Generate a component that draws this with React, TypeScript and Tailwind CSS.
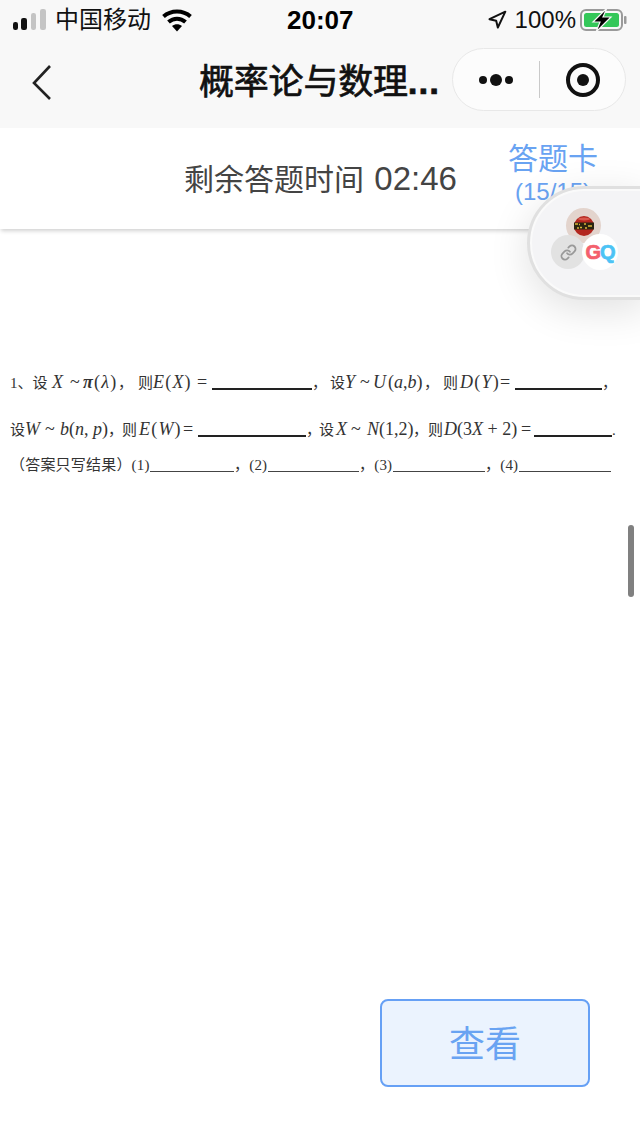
import type { ReactNode } from "react";
import { Link, Navigation } from "lucide-react";

const cjk = { fontFamily: '"Liberation Sans", "Noto Sans CJK SC", sans-serif' };
const serif = { fontFamily: '"Liberation Serif", "Noto Sans CJK SC", serif' };

function SignalBars() {
  return (
    <svg width="34" height="22" viewBox="0 0 34 22">
      <rect x="0" y="13" width="5" height="8" rx="2.2" fill="#111" />
      <rect x="8" y="9" width="6" height="12" rx="2.2" fill="#111" />
      <rect x="18" y="4" width="5" height="17" rx="2.2" fill="#c4c4c4" />
      <rect x="27" y="0" width="6" height="21" rx="2.2" fill="#c4c4c4" />
    </svg>
  );
}

function Wifi() {
  return (
    <svg width="30" height="23" viewBox="0 0 30 23" fill="none" stroke="#000" strokeWidth="4">
      <path d="M1.5 7.5C9 0.8 21 0.8 28.5 7.5" />
      <path d="M6.5 13C11.5 8.5 18.5 8.5 23.5 13" />
      <path d="M10 17L15 22.5L20 17C17 14.5 13 14.5 10 17Z" fill="#000" stroke="none" />
    </svg>
  );
}

function Battery() {
  return (
    <svg width="48" height="24" viewBox="0 0 48 24">
      <rect x="1" y="2" width="41" height="20" rx="5" fill="none" stroke="#9a9a9a" strokeWidth="2" />
      <rect x="4" y="5" width="35" height="14" rx="2.5" fill="#34c759" />
      <rect x="44" y="8" width="2.5" height="8" rx="1" fill="#9a9a9a" />
      <path d="M27 0L13 14H20L16 24L31 9H23Z" fill="#000" stroke="#f8f8f8" strokeWidth="1.2" />
    </svg>
  );
}

function Lips() {
  return (
    <svg width="22" height="22" viewBox="0 0 22 22">
      <ellipse cx="11" cy="11" rx="10" ry="10" fill="#b3261e" />
      <ellipse cx="11" cy="4" rx="6" ry="1.5" fill="#d9574c" />
      <rect x="1" y="7.5" width="20" height="7" fill="#2a2410" />
      <path d="M2 9h3M7 12.5h2M11 9h2M15 11h4M4 13h2M12 13h2M6 9.5h1" stroke="#d9b53a" strokeWidth="1.4" />
    </svg>
  );
}

function FloatingPill() {
  return (
    <div className="absolute left-[527px] top-[186px] h-[114px] w-[120px] rounded-l-[57px] border-[3px] border-[#e0e0e0] bg-[#f4f4f6] shadow-[0_10px_40px_rgba(0,0,0,0.12),inset_0_0_0_2px_#fafafa]">
      <div className="absolute left-[36px] top-[19px] flex h-[35px] w-[35px] items-center justify-center rounded-full bg-[#e3d4cd]">
        <Lips />
      </div>
      <div className="absolute left-[21px] top-[46px] flex h-[34px] w-[34px] items-center justify-center rounded-full bg-[#e2e2e2]">
        <Link size={17} color="#999" strokeWidth={2.5} />
      </div>
      <div className="absolute left-[52px] top-[45px] flex h-[36px] w-[36px] items-center justify-center rounded-full bg-white text-[20px] font-bold leading-none tracking-[-1px]">
        <span className="text-[#f4606c] [-webkit-text-stroke:0.7px_#f4606c]">G</span>
        <span className="text-[#4cc3f5] [-webkit-text-stroke:0.7px_#4cc3f5]">Q</span>
      </div>
    </div>
  );
}

function Underline({ w, mb }: { w: string; mb: string }) {
  return <span className={`inline-block h-0 self-end ${w} ${mb} border-b-2 border-[#222]`} />;
}

function ThinLine({ w }: { w: string }) {
  return <span className={`mb-[3px] inline-block h-0 self-end ${w} border-b border-[#444]`} />;
}

// math is set a little larger than the CJK around it
function M({ w, tight, children }: { w: string; tight?: boolean; children: ReactNode }) {
  return <span className={`${w} text-[18px] ${tight ? "tracking-[0px]" : "tracking-[1.2px]"}`}>{children}</span>;
}

function Question() {
  const row = "flex h-[20px] items-baseline whitespace-nowrap text-[15px] leading-[20px] text-[#333]";
  return (
    <div className="mt-[143px] flex flex-col pl-[10px]" style={serif}>
      <div className={row}>
        <span className="w-[42px]">1、设</span>
        <M w="w-[18px]"><i>X</i></M>
        <M w="w-[13px]">~</M>
        <M w="w-[35px]"><b><i>π</i></b>(<i>λ</i>)</M>
        <span className="w-[20px]">，</span>
        <span className="w-[15px]">则</span>
        <M w="w-[44px]"><i>E</i>(<i>X</i>)</M>
        <M w="w-[15px]">=</M>
        <Underline w="w-[100px]" mb="mb-[2px]" />
        <span className="w-[18px]">，</span>
        <span className="w-[15px]">设</span>
        <M w="w-[15px]"><i>Y</i></M>
        <M w="w-[13px]">~</M>
        <M w="w-[15px]"><i>U</i></M>
        <M w="w-[36px]" tight>(<i>a</i>,<i>b</i>)</M>
        <span className="w-[19px]">，</span>
        <span className="w-[17px]">则</span>
        <M w="w-[40px]"><i>D</i>(<i>Y</i>)</M>
        <M w="w-[15px]">=</M>
        <Underline w="w-[87px]" mb="mb-[2px]" />
        <span>，</span>
      </div>
      <div className={`${row} mt-[27px]`}>
        <span className="w-[15px]">设</span>
        <M w="w-[20px]"><i>W</i></M>
        <M w="w-[15px]">~</M>
        <M w="w-[48px]" tight><i>b</i>(<i>n</i>, <i>p</i>)</M>
        <span className="w-[14px]">，</span>
        <span className="w-[17px]">则</span>
        <M w="w-[44px]"><i>E</i>(<i>W</i>)</M>
        <M w="w-[15px]">=</M>
        <Underline w="w-[108px]" mb="mb-[2px]" />
        <span className="w-[13px]">，</span>
        <span className="w-[17px]">设</span>
        <M w="w-[15px]"><i>X</i></M>
        <M w="w-[16px]">~</M>
        <M w="w-[46px]" tight><i>N</i>(1,2)</M>
        <span className="w-[15px]">，</span>
        <span className="w-[16px]">则</span>
        <M w="w-[77px]" tight><i>D</i>(3<i>X</i> + 2)</M>
        <M w="w-[13px]">=</M>
        <Underline w="w-[78px]" mb="mb-[2px]" />
        <span>.</span>
      </div>
      <div className={`${row} mt-[16px] tracking-[0.2px]`}>
        <span className="w-[140px]">（答案只写结果）(1)</span>
        <ThinLine w="w-[84px]" />
        <span className="w-[34px]">，(2)</span>
        <ThinLine w="w-[91px]" />
        <span className="w-[34px]">，(3)</span>
        <ThinLine w="w-[92px]" />
        <span className="w-[34px]">，(4)</span>
        <ThinLine w="w-[92px]" />
      </div>
    </div>
  );
}

export default function App() {
  return (
    <div className="relative flex h-[1136px] w-[640px] flex-col overflow-hidden bg-white" style={cjk}>
      <header className="h-[128px] shrink-0 bg-[#f8f8f8]">
        <div className="flex h-[40px] items-center pl-[13px] pr-[12px]">
          <div className="flex w-[274px] items-center gap-[8px]">
            <SignalBars />
            <span className="text-[24px] leading-none text-[#111]">中国移动</span>
            <span className="ml-[3px]"><Wifi /></span>
          </div>
          <span className="text-[26px] font-semibold leading-none text-black">20:07</span>
          <div className="ml-auto flex items-center gap-[4px]">
            <span className="mr-[4px]"><Navigation size={20} color="#111" strokeWidth={2.4} /></span>
            <span className="text-[24px] leading-none text-[#111]">100%</span>
            <Battery />
          </div>
        </div>
        <div className="relative flex h-[88px] items-center pl-[26px]">
          <svg width="30" height="40" viewBox="0 0 30 40" fill="none" stroke="#222" strokeWidth="2.6" className="mt-[-1px]">
            <path d="M24 2L8 19L24 35" />
          </svg>
          <span className="ml-[143px] mt-[-6px] text-[35px] font-normal leading-none tracking-[-0.2px] text-[#111] [-webkit-text-stroke:0.7px_#111]">
            概率论与数理<span className="font-bold tracking-[1px]">...</span>
          </span>
          <div className="absolute left-[452px] top-[8px] flex h-[63px] w-[174px] items-center rounded-full border border-[#e8e8e8] bg-[#fcfcfc]">
            <div className="flex w-[86px] items-center justify-center gap-[3px]">
              <span className="h-[8px] w-[8px] rounded-full bg-[#111]" />
              <span className="h-[12px] w-[12px] rounded-full bg-[#111]" />
              <span className="h-[8px] w-[8px] rounded-full bg-[#111]" />
            </div>
            <span className="h-[37px] w-px bg-[#c9c9c9]" />
            <div className="flex flex-1 items-center justify-center">
              <span className="flex h-[34px] w-[34px] items-center justify-center rounded-full border-[4px] border-[#111]">
                <span className="h-[12px] w-[12px] rounded-full bg-[#111]" />
              </span>
            </div>
          </div>
        </div>
      </header>

      <div className="relative flex h-[101px] shrink-0 items-center bg-white shadow-[0_3px_4px_-1px_rgba(0,0,0,0.18)]">
        <span className="ml-[184px] text-[30px] leading-none text-[#444]">
          剩余答题时间 <span className="ml-[2px] text-[33px]">02:46</span>
        </span>
        <div className="absolute left-[500px] top-[12px] flex w-[106px] flex-col items-center text-[#69a3f2]">
          <span className="text-[30px] leading-[38px]">答题卡</span>
          <span className="text-[24px] leading-[28px]">(15/15)</span>
        </div>
      </div>

      <main className="flex flex-1 flex-col justify-between">
        <Question />
        <div className="mb-[49px] flex justify-end pr-[50px]">
          <button className="flex h-[88px] w-[210px] items-center justify-center rounded-[8px] border-2 border-[#66a0f5] bg-[#ebf3fe] pt-[3px] text-[36px] text-[#69a3f2]">
            查看
          </button>
        </div>
      </main>

      <FloatingPill />
      <div className="absolute left-[628px] top-[525px] h-[72px] w-[6px] rounded-full bg-[#808080]" />
    </div>
  );
}
